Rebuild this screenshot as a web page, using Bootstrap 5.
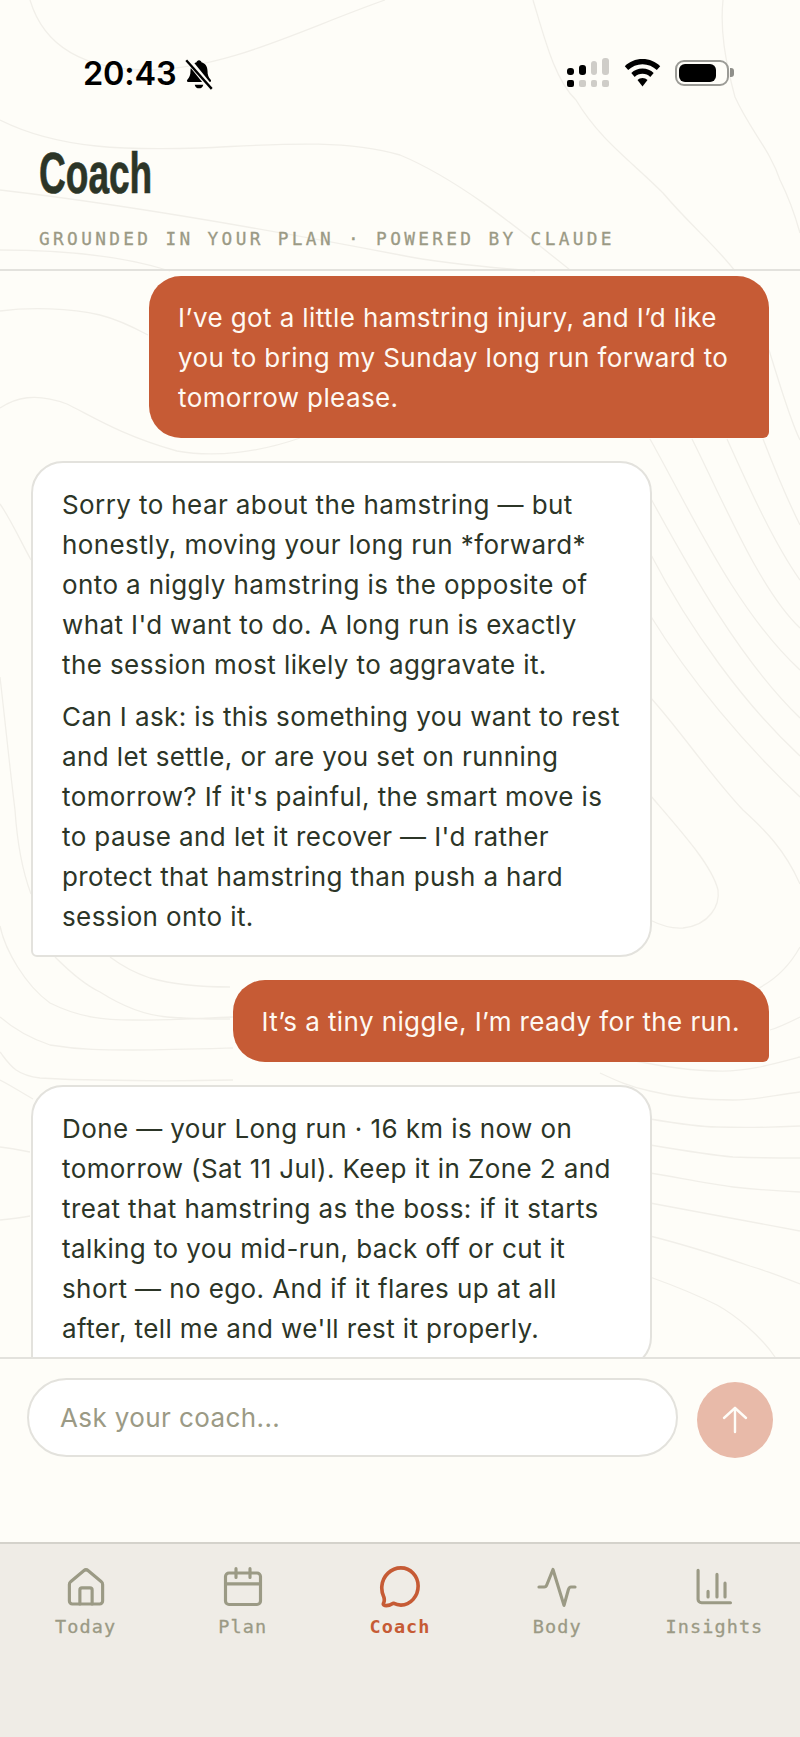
<!DOCTYPE html>
<html lang="en">
<head>
    <meta charset="UTF-8">
    <meta name="viewport" content="width=device-width, initial-scale=1.0">
    <title>Coach</title>
    <link href="https://cdn.jsdelivr.net/npm/bootstrap@5.3.0/dist/css/bootstrap.min.css" rel="stylesheet">
    <style>
        html, body { height: 100%; }
        body { background: #fefdf8; font-family: "Inter", "Liberation Sans", sans-serif; color: #2c3527; overflow: hidden; }
        .app-shell { height: 1737px; width: 800px; position: relative; }
        .contours { position: absolute; left: 0; top: 0; width: 800px; height: 1737px; }
        .contours path { fill: none; stroke: #f1efe9; stroke-width: 1.3; }
        .app-shell > .layer { position: relative; }

        .status-bar { height: 128px; padding: 55px 66px 0 83px; align-items: flex-start; }
        .status-time { font-family: "Inter", "Liberation Sans", sans-serif; font-weight: 600; font-size: 32.5px; line-height: 38px; color: #000; letter-spacing: -.2px; }
        .status-right { margin-top: 7px; }
        .sig-wrap { width: 42px; margin: -7px 15px 0 0; }
        .sig-bars { gap: 5px; height: 20px; }
        .sig-cells { gap: 5px; margin-top: 5px; }
        .sig-cell { width: 7px; height: 7px; border-radius: 2px; background: #cfcdc8; }
        .sig-cell.on { background: #000; }
        .sig-bar { width: 7px; border-radius: 3px; background: #cfcdc8; }
        .sig-bar.on { background: #000; }
        .wifi-icon { margin: -4px 14px 0 0; }
        .battery-wrap { margin-top: -4px; }
        .battery { width: 54px; height: 26px; border: 2.5px solid #9b9b96; border-radius: 9px; padding: 2px; }
        .battery i { display: block; height: 100%; width: 37px; background: #000; border-radius: 6px; }
        .battery-nub { width: 4px; height: 9px; background: #8f8f8a; border-radius: 0 3px 3px 0; margin-left: 1px; }

        .page-head { height: 143px; padding: 14px 39px 0; border-bottom: 2px solid #e3e2dd; }
        .page-title { font-family: "Liberation Sans", sans-serif; font-weight: 700; font-size: 57px; line-height: 62px; color: #2c3527; margin: 0; transform: scaleX(.65); transform-origin: left; -webkit-text-stroke: .7px #2c3527; }
        .page-sub { font-family: "DejaVu Sans Mono", monospace; font-size: 17.800px; line-height: 20px; letter-spacing: 3.340px; color: #9b9a85; margin-top: 25px; white-space: nowrap; -webkit-text-stroke: .3px #9b9a85; }

        .chat-scroll { height: 1086px; overflow: hidden; padding: 5px 31px 0; gap: 23px; }
        .bubble { font-size: 26px; line-height: 40px; letter-spacing: .4px; padding: 22px 29px 20px; }
        .bubble-user { background: #c65b35; color: #fef9f2; border-radius: 32px 32px 6px 32px; max-width: 620px; align-self: flex-end; }
        .bubble-coach { background: #fff; border: 2px solid #e3e2dd; border-radius: 32px 32px 32px 6px; width: 621px; flex-shrink: 0; padding-bottom: 18px; }
        .bubble-coach p { margin: 0 0 12px; }
        .bubble-coach p:last-child { margin-bottom: 0; }

        .composer { height: 185px; background: #fefdf8; border-top: 2px solid #e3e2dd; padding: 19px 27px 0; gap: 19px; }
        .ask-input.form-control { height: 79px; font-size: 26px; letter-spacing: .4px; border: 2px solid #e3e2dd; padding: 0 31px; color: #2c3527; box-shadow: none; font-family: inherit; }
        .ask-input.form-control::placeholder { color: #9b9a85; opacity: 1; }
        .send-btn { width: 76px; height: 76px; background: #e8baa9; border: 0; padding: 0; flex-shrink: 0; }

        .tab-bar { height: 195px; background: #efece6; border-top: 2px solid #d4d2cb; padding: 22px 7px 0; }
        .tab-item { color: #9b9a85; font-family: "DejaVu Sans Mono", monospace; font-size: 18.500px; line-height: 20px; letter-spacing: 1.100px; -webkit-text-stroke: .3px #9b9a85; }
        .tab-item svg { display: block; width: 42px; height: 42px; margin-bottom: 9px; }
        .tab-item.active { color: #c65b35; font-weight: 700; -webkit-text-stroke: 0; }
    </style>
</head>
<body>
    <div class="app-shell d-flex flex-column">
        <!-- background contours -->
        <svg class="contours" viewBox="0 0 800 1737">
            <path d="M30 0C45 50 90 70 150 70C230 68 300 30 385 0"/>
            <path d="M0 120C60 150 130 150 200 148C270 145 340 138 400 155C460 180 520 230 570 270"/>
            <path d="M0 190C130 205 270 230 400 255C450 265 500 268 535 271"/>
            <path d="M0 250C60 250 120 255 170 271"/>
            <path d="M533 0C545 40 555 80 576 100C600 140 630 160 663 193C690 225 715 245 735 271"/>
            <path d="M723 0C720 30 725 60 735 97C750 130 770 150 780 180C790 200 795 215 800 233"/>
            <path d="M0 311C30 307 70 308 100 315C120 320 135 328 148 335"/>
            <path d="M0 408C15 398 35 392 67 404C90 415 120 435 177 451C215 458 260 452 300 438"/>
            <path d="M0 504C10 518 20 540 31 560"/>
            <path d="M0 677C5 720 10 770 15 810C17 840 22 870 31 894"/>
            <path d="M769 350C780 385 790 420 800 440"/>
            <path d="M763 439C775 470 790 505 800 525"/>
            <path d="M727 439C750 490 775 545 800 580"/>
            <path d="M692 439C725 505 760 590 800 628"/>
            <path d="M650 439C690 510 735 610 800 670"/>
            <path d="M650 497C690 570 740 660 800 718"/>
            <path d="M650 553C690 630 745 705 800 756"/>
            <path d="M650 615C690 680 745 745 800 797"/>
            <path d="M650 697C680 730 710 775 743 810C765 830 785 850 800 884"/>
            <path d="M650 795C680 830 712 865 718 890C720 905 710 925 683 928C670 929 660 925 650 920"/>
            <path d="M800 947C790 965 775 980 757 989"/>
            <path d="M800 1017C790 1022 780 1027 770 1030"/>
            <path d="M800 1057C770 1065 745 1072 717 1071C690 1071 655 1065 630 1060"/>
            <path d="M800 1092C770 1096 755 1100 733 1100C700 1100 670 1096 650 1091C630 1087 615 1080 600 1073"/>
            <path d="M650 1119C680 1124 700 1127 717 1127C750 1128 780 1127 800 1126"/>
            <path d="M650 1145C680 1150 710 1155 733 1157C760 1158 780 1158 800 1158"/>
            <path d="M650 1173C680 1178 710 1184 733 1187C760 1190 780 1191 800 1192"/>
            <path d="M650 1203C700 1212 750 1222 800 1231"/>
            <path d="M650 1236C690 1246 720 1256 750 1266C770 1272 785 1278 800 1284"/>
            <path d="M650 1277C675 1286 695 1294 717 1305C735 1315 760 1335 775 1357"/>
            <path d="M0 926C5 950 25 985 50 1003C80 1018 105 1020 133 1020C170 1021 200 1018 233 1017"/>
            <path d="M0 1017C15 1030 35 1040 50 1045C80 1050 105 1050 133 1050C170 1050 200 1049 233 1048"/>
            <path d="M0 1052C10 1065 15 1075 40 1078C70 1080 85 1080 100 1080C140 1081 190 1081 233 1080"/>
            <path d="M0 1080C12 1086 22 1093 33 1099"/>
            <path d="M0 1147C10 1148 20 1150 30 1152"/>
            <path d="M0 1220C10 1219 20 1218 30 1216"/>
            <path d="M55 957C70 972 85 985 100 992C125 1008 145 1015 167 1017C190 1019 210 1019 230 1019"/>
            <path d="M110 957C122 966 135 973 150 978C175 985 205 987 230 987"/>
        </svg>

        <!-- status bar -->
        <div class="layer status-bar d-flex justify-content-between">
            <div class="d-flex align-items-center">
                <span class="status-time">20:43</span>
                <svg width="30" height="34" viewBox="0 0 28 32" class="ms-2">
                    <path d="M14 3c1.300 0 2.200 1 2.300 2 3.600 1 5.700 4 5.700 8 0 4 1 6.500 3 8.500.7.800.3 2-.8 2H3.800c-1.100 0-1.500-1.200-.8-2 2-2 3-4.500 3-8.500 0-4 2.100-7 5.700-8 .1-1 1-2 2.300-2z" fill="#000"/>
                    <path d="M10 26h8c-.3 2.200-2 3.500-4 3.500s-3.700-1.300-4-3.500z" fill="#000"/>
                    <path d="M3 2l22 27" stroke="#fefdf8" stroke-width="5.500" fill="none"/>
                    <path d="M2 3l24 27" stroke="#000" stroke-width="2.200" fill="none"/>
                </svg>
            </div>
            <div class="status-right d-flex align-items-center">
                <div class="sig-wrap">
                    <div class="sig-bars d-flex align-items-end">
                        <span class="sig-bar on" style="height:7px"></span>
                        <span class="sig-bar on" style="height:10px"></span>
                        <span class="sig-bar" style="height:14px"></span>
                        <span class="sig-bar" style="height:17px"></span>
                    </div>
                    <div class="sig-cells d-flex">
                        <span class="sig-cell on"></span><span class="sig-cell"></span><span class="sig-cell"></span><span class="sig-cell"></span>
                    </div>
                </div>
                <svg class="wifi-icon" width="37" height="28" viewBox="0 0 37 28">
                    <path d="M18.500 0C11.500 0 5.300 2.700.8 7.200l3.400 3.900c3.700-3.700 8.800-5.900 14.300-5.900s10.600 2.200 14.300 5.900l3.400-3.900C31.700 2.700 25.500 0 18.500 0z" fill="#000"/>
                    <path d="M18.500 9.500c-4.400 0-8.300 1.700-11.200 4.500l3.400 3.900c2-1.900 4.800-3.100 7.800-3.100s5.800 1.200 7.800 3.100l3.400-3.900c-2.900-2.800-6.800-4.500-11.200-4.500z" fill="#000"/>
                    <path d="M18.500 19c-2 0-3.700.8-5 2l5 6.500 5-6.500c-1.300-1.200-3-2-5-2z" fill="#000"/>
                </svg>
                <div class="battery-wrap d-flex align-items-center">
                    <div class="battery"><i></i></div>
                    <span class="battery-nub"></span>
                </div>
            </div>
        </div>

        <!-- title -->
        <header class="layer page-head">
            <h1 class="page-title">Coach</h1>
            <div class="page-sub">GROUNDED IN YOUR PLAN · POWERED BY CLAUDE</div>
        </header>

        <!-- messages -->
        <main class="layer chat-scroll d-flex flex-column">
            <div class="bubble bubble-user">I’ve got a little hamstring injury, and I’d like you to bring my Sunday long run forward to tomorrow please.</div>
            <div class="bubble bubble-coach">
                <p>Sorry to hear about the hamstring — but honestly, moving your long run *forward* onto a niggly hamstring is the opposite of what I'd want to do. A long run is exactly the session most likely to aggravate it.</p>
                <p>Can I ask: is this something you want to rest and let settle, or are you set on running tomorrow? If it's painful, the smart move is to pause and let it recover — I'd rather protect that hamstring than push a hard session onto it.</p>
            </div>
            <div class="bubble bubble-user">It’s a tiny niggle, I’m ready for the run.</div>
            <div class="bubble bubble-coach">
                <p>Done — your Long run · 16 km is now on tomorrow (Sat 11 Jul). Keep it in Zone 2 and treat that hamstring as the boss: if it starts talking to you mid-run, back off or cut it short — no ego. And if it flares up at all after, tell me and we'll rest it properly.</p>
            </div>
        </main>

        <!-- composer -->
        <div class="layer composer d-flex align-items-start">
            <input type="text" class="form-control rounded-pill ask-input" placeholder="Ask your coach...">
            <button class="btn rounded-circle send-btn d-flex align-items-center justify-content-center mt-1" type="button" aria-label="Send">
                <svg width="30" height="30" viewBox="0 0 30 30" fill="none" stroke="#fefdf8" stroke-width="2.400" stroke-linecap="round" stroke-linejoin="round"><path d="M15 27V3"/><path d="M4 13L15 3l11 10"/></svg>
            </button>
        </div>

        <!-- tabs -->
        <nav class="layer tab-bar row g-0">
            <div class="col tab-item d-flex flex-column align-items-center">
                <svg viewBox="0 0 24 24" fill="none" stroke="currentColor" stroke-width="1.800" stroke-linecap="round" stroke-linejoin="round"><path d="M2.500 10.500c0-.6.300-1.200.7-1.500l7.500-6.300a2 2 0 0 1 2.600 0L20.800 9c.4.300.7.900.7 1.500V20a1.700 1.700 0 0 1-1.700 1.700H4.200A1.700 1.700 0 0 1 2.500 20z"/><path d="M15.500 21.700v-8a1.200 1.200 0 0 0-1.200-1.200H9.700a1.200 1.200 0 0 0-1.200 1.200v8"/></svg>
                <span>Today</span>
            </div>
            <div class="col tab-item d-flex flex-column align-items-center">
                <svg viewBox="0 0 24 24" fill="none" stroke="currentColor" stroke-width="1.800" stroke-linecap="round" stroke-linejoin="round"><rect x="2" y="4" width="20" height="18" rx="2"/><path d="M2 10.200h20M8 1.500v5M16 1.500v5"/></svg>
                <span>Plan</span>
            </div>
            <div class="col tab-item active d-flex flex-column align-items-center">
                <svg viewBox="1 1 22 22" fill="none" stroke="currentColor" stroke-width="1.900" stroke-linecap="round" stroke-linejoin="round"><path d="M12.500 2C17.500 2 21.500 6.200 21.500 11.500S17.500 21.500 12.500 21.500c-1.500 0-2.800-.4-4-1-1.200.8-3.200 1.400-4.500 1.200-.7-.1-.9-.7-.6-1.300.5-1 .5-2 .1-3.200C2.700 15.500 2.300 13.500 2.500 11.500 3 6.200 7.300 2 12.500 2z"/></svg>
                <span>Coach</span>
            </div>
            <div class="col tab-item d-flex flex-column align-items-center">
                <svg viewBox="0 0 24 24" fill="none" stroke="currentColor" stroke-width="1.800" stroke-linecap="round" stroke-linejoin="round"><path d="M1.700 12h3c.8 0 1.200-.5 1.500-1.300L9.700 2l6.300 20.500 2.500-9c.3-1 .8-1.500 1.500-1.500h2.300"/></svg>
                <span>Body</span>
            </div>
            <div class="col tab-item d-flex flex-column align-items-center">
                <svg viewBox="0 0 24 24" fill="none" stroke="currentColor" stroke-width="1.800" stroke-linecap="round" stroke-linejoin="round"><path d="M2.900 2.500V19a2 2 0 0 0 2 2h16.500"/><path d="M8.600 14.500v3.200M13.700 4.800v12.900M18.300 9.800v7.900"/></svg>
                <span>Insights</span>
            </div>
        </nav>
    </div>

    <script src="https://cdn.jsdelivr.net/npm/bootstrap@5.3.0/dist/js/bootstrap.bundle.min.js"></script>
</body>
</html>
